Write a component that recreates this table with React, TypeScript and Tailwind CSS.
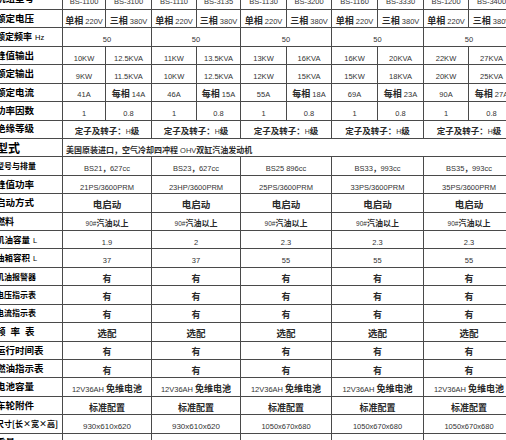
import React from "react";

type Cell = { t: string; span?: 1 | 2 | 10; left?: boolean; cjk?: string; lat?: string };
type Row = { label: React.ReactNode; lc: string; cells: Cell[]; rc?: string };

const CJK_RE = /([\u2E80-\u9FFF\uFF00-\uFFEF\u3000-\u303F]+)/;

function Mixed({ text, cjk, lat }: { text: string; cjk: string; lat: string }) {
  const parts = text.split(CJK_RE).filter((p) => p.length > 0);
  return (
    <span className="whitespace-pre">
      {parts.map((p, i) =>
        CJK_RE.test(p) ? (
          <span key={i} className={cjk + " font-['Noto_Sans_CJK_SC',sans-serif] font-semibold text-[#2a2a2a]"}>
            {p}
          </span>
        ) : (
          <span key={i} className={lat}>
            {p}
          </span>
        )
      )}
    </span>
  );
}

const ten = (vals: string[], cjk?: string): Cell[] => vals.map((t) => ({ t, cjk }));
const alt = (a: string, b: string, cjk?: string): Cell[] => {
  const out: Cell[] = [];
  for (let i = 0; i < 5; i++) {
    out.push({ t: a, cjk });
    out.push({ t: b, cjk });
  }
  return out;
};
const five = (vals: string[] | string, cjk?: string, lat?: string): Cell[] => {
  const arr = typeof vals === "string" ? [vals, vals, vals, vals, vals] : vals;
  return arr.map((t) => ({ t, span: 2, cjk, lat }));
};

const Unit = ({ u }: { u: string }) => (
  <span className="font-['Liberation_Sans',sans-serif] font-normal text-[7.5px] ml-[3px] tracking-normal">{u}</span>
);

const rows: Row[] = [
  {
    label: "机组型号",
    lc: "text-[9.5px]",
    rc: "pb-[3px]",
    cells: ten(["BS-1100", "BS-3100", "BS-1110", "BS-3135", "BS-1130", "BS-3200", "BS-1160", "BS-3330", "BS-1200", "BS-3400"]),
  },
  { label: "额定电压", lc: "text-[9.5px]", cells: alt("单相 220V", "三相 380V", "text-[9px]") },
  { label: <>额定频率<Unit u="Hz" /></>, lc: "text-[9px]", cells: five("50") },
  {
    label: "峰值输出",
    lc: "text-[9.5px]",
    cells: ten(["10KW", "12.5KVA", "11KW", "13.5KVA", "13KW", "16KVA", "16KW", "20KVA", "22KW", "27KVA"]),
  },
  {
    label: "额定输出",
    lc: "text-[9.5px]",
    cells: ten(["9KW", "11.5KVA", "10KW", "12.5KVA", "12KW", "15KVA", "15KW", "18KVA", "20KW", "25KVA"]),
  },
  {
    label: "额定电流",
    lc: "text-[9.5px]",
    cells: ten(["41A", "每相 14A", "46A", "每相 15A", "55A", "每相 18A", "69A", "每相 23A", "90A", "每相 27A"], "text-[9px]"),
  },
  { label: "功率因数", lc: "text-[9.5px]", cells: alt("1", "0.8") },
  { label: "绝缘等级", lc: "text-[9.5px]", cells: five("定子及转子：H级", "text-[8.5px]", "text-[7px]") },
  {
    label: "型式",
    lc: "text-[12px]",
    cells: [{ t: "美国原装进口，空气冷却四冲程 OHV双缸汽油发动机", span: 10, left: true, cjk: "text-[8px]" }],
  },
  {
    label: "型号与排量",
    lc: "text-[8px]",
    cells: five(["BS21，627cc", "BS23，627cc", "BS25 896cc", "BS33，993cc", "BS35，993cc"], "text-[7.5px]"),
  },
  {
    label: "峰值功率",
    lc: "text-[9.5px]",
    cells: five(["21PS/3600PRM", "23HP/3600PRM", "25PS/3600PRM", "33PS/3600PRM", "35PS/3600PRM"]),
  },
  { label: "启动方式", lc: "text-[9.5px]", cells: five("电启动", "text-[9.5px]") },
  { label: "燃料", lc: "text-[9px]", cells: five("90#汽油以上", "text-[8px]", "text-[6.5px]") },
  { label: <>机油容量<Unit u="L" /></>, lc: "text-[8.5px]", cells: five(["1.9", "2", "2.3", "2.3", "2.3"]) },
  { label: <>油箱容积<Unit u="L" /></>, lc: "text-[8.5px]", cells: five(["37", "37", "55", "55", "55"]) },
  { label: "机油报警器", lc: "text-[8px]", cells: five("有", "text-[9px]") },
  { label: "电压指示表", lc: "text-[8px]", cells: five("有", "text-[9px]") },
  { label: "电流指示表", lc: "text-[8px]", cells: five("有", "text-[9px]") },
  { label: <span className="tracking-[5px]">频率表</span>, lc: "text-[9.5px]", cells: five("选配", "text-[9.5px]") },
  { label: "运行时间表", lc: "text-[9.5px]", cells: five("有", "text-[9px]") },
  { label: "燃油指示表", lc: "text-[9.5px]", cells: five("有", "text-[9px]") },
  { label: "电池容量", lc: "text-[9.5px]", cells: five("12V36AH 免维电池", "text-[9px]") },
  { label: "车轮附件", lc: "text-[9.5px]", cells: five("标准配置", "text-[9px]") },
  {
    label: "尺寸[长×宽×高]",
    lc: "text-[8px]",
    cells: [
      { t: "930x610x620", span: 2, lat: "text-[8px]" },
      { t: "930x610x620", span: 2, lat: "text-[8px]" },
      { t: "1050x670x680", span: 2 },
      { t: "1050x670x680", span: 2 },
      { t: "1050x670x680", span: 2 },
    ],
  },
  { label: <>重量<Unit u="[KG]" /></>, lc: "text-[9.5px]", cells: five(["150", "160", "180", "200", "200"]) },
];

const spanCls = (s?: number) => (s === 10 ? "col-span-10" : s === 2 ? "col-span-2" : "col-span-1");

export default function App() {
  return (
    <div className="w-[506px] h-[440px] overflow-hidden bg-white">
      <div className="ml-[-7px] mt-[-8.43px] grid grid-cols-[70px_43px_46px_45px_44px_46px_45px_46px_46px_45px_46px] auto-rows-[18.43px] w-[522px] font-['Liberation_Sans','Noto_Sans_CJK_SC',sans-serif] text-[#333]">
        {rows.map((r, ri) => (
          <React.Fragment key={ri}>
            <div
              className={
                "border-r border-b border-[#4a4a4a] flex items-center pl-[3px] whitespace-pre overflow-hidden leading-none font-bold text-black font-['Noto_Sans_CJK_SC',sans-serif] " +
                r.lc +
                " " +
                (r.rc ?? "")
              }
            >
              <span>{r.label}</span>
            </div>
            {r.cells.map((c, ci) => (
              <div
                key={ci}
                className={
                  spanCls(c.span) +
                  " border-b border-[#4a4a4a] flex items-center whitespace-nowrap overflow-hidden leading-none " +
                  (c.span === 10 ? "border-r-0 justify-start pl-[3px] " : "border-r justify-center ") +
                  (r.rc ?? "")
                }
              >
                <Mixed text={c.t} cjk={c.cjk ?? "text-[8.5px]"} lat={c.lat ?? "text-[7.5px]"} />
              </div>
            ))}
          </React.Fragment>
        ))}
      </div>
    </div>
  );
}
